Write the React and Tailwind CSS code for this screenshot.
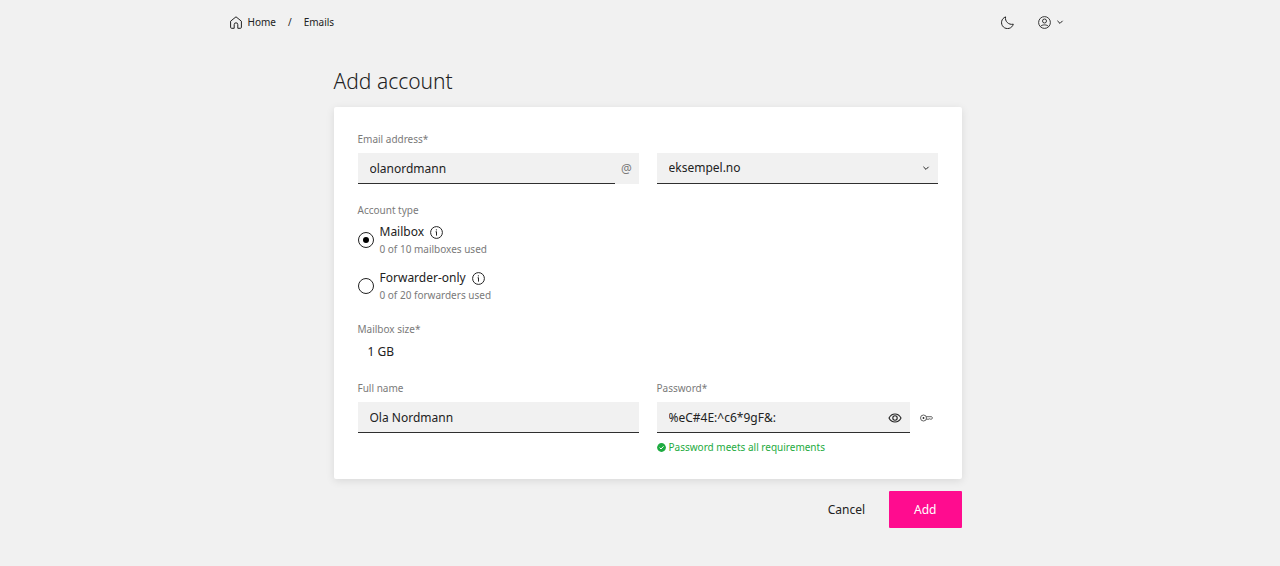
import { useState } from "react";

const label = "block text-[10px] leading-4 text-[#7a7a7a]";
const field =
  "block h-[31px] w-full min-w-0 appearance-none rounded-none border-b border-[#2f2f2f] bg-[#f1f1f1] px-3 text-xs leading-5 text-[#222] outline-none";

function Chevron({ className }) {
  return (
    <svg className={className} viewBox="0 0 8 8" fill="none" stroke="currentColor" strokeWidth="1" aria-hidden="true">
      <path d="M1.4 2.8 4 5.4 6.6 2.8" />
    </svg>
  );
}

function InfoIcon() {
  return (
    <svg className="size-[13px]" viewBox="0 0 13 13" fill="none" stroke="currentColor" aria-hidden="true">
      <circle cx="6.5" cy="6.5" r="5.9" strokeWidth="1" />
      <path d="M6.5 5.6V9.6M5.6 5.8h.9" strokeWidth="1" />
      <circle cx="6.4" cy="3.8" r=".65" fill="currentColor" stroke="none" />
    </svg>
  );
}

function AccountType({ id, title, used, checked, onSelect }) {
  return (
    <div className="flex items-center gap-[6px]">
      <input
        id={id}
        type="radio"
        name="account-type"
        checked={checked}
        onChange={onSelect}
        className="size-4 shrink-0 appearance-none rounded-full border border-[#222] bg-white bg-clip-content p-1 checked:bg-black"
      />
      <div>
        <div className="flex items-center gap-[6px] text-[#222]">
          <label htmlFor={id} className="text-xs leading-[18px]">
            {title}
          </label>
          <button type="button" aria-label={`About ${title}`}>
            <InfoIcon />
          </button>
        </div>
        <p className={label}>{used}</p>
      </div>
    </div>
  );
}

export default function App() {
  const [type, setType] = useState("mailbox");
  return (
    <div className="min-h-screen bg-[#f1f1f1] pl-[15px] font-['Noto_Sans','Open_Sans',sans-serif] text-[#222]">
      <header className="mx-auto flex h-11 max-w-[836px] items-center justify-between">
        <nav className="flex items-center text-[10px] leading-4" aria-label="Breadcrumb">
          <a href="#home" className="flex items-center gap-[6px]">
            <svg className="h-[13px] w-3" viewBox="0 0 12 13" fill="none" stroke="currentColor" strokeWidth="1" aria-hidden="true">
              <path d="M4.2 12.3H1.6Q.6 12.3.6 11.3V5.2L6 .8l5.4 4.4v6.1q0 1-1 1H7.8V8.6a1.8 1.8 0 0 0-3.6 0z" strokeLinejoin="round" />
            </svg>
            Home
          </a>
          <span className="mx-3">/</span>
          <a href="#emails">Emails</a>
        </nav>
        <div className="flex items-center gap-6 pr-[2px]">
          <button type="button" aria-label="Dark mode">
            <svg className="size-[13px]" viewBox="0 0 13 13" fill="none" stroke="currentColor" strokeWidth="1" strokeLinejoin="round" aria-hidden="true">
              <path d="M4.6.9C3.6 5.2 7.6 9.2 12.3 8.2A6 6 0 1 1 4.6.9z" />
            </svg>
          </button>
          <button type="button" aria-label="Profile" className="flex items-center gap-[5px]">
            <svg className="size-[13px]" viewBox="0 0 13 13" fill="none" stroke="currentColor" strokeWidth=".9" aria-hidden="true">
              <circle cx="6.5" cy="6.5" r="5.9" />
              <circle cx="6.5" cy="5" r="2" />
              <path d="M2.600 10.400C3.700 8.400 9.300 8.400 10.400 10.400" />
            </svg>
            <Chevron className="size-2" />
          </button>
        </div>
      </header>

      <main className="mx-auto max-w-[628px] pt-[21px] pb-8">
        <h1 className="text-[21px] leading-8 font-light">Add account</h1>

        <form onSubmit={(e) => e.preventDefault()}>
          <div className="mt-[10px] rounded-xs bg-white px-6 py-6 shadow-[0_2px_8px_rgba(0,0,0,0.1)]">
            <div className="grid grid-cols-2 items-end gap-x-[18px]">
              <div>
                <label htmlFor="email" className={label}>
                  Email address*
                </label>
                <div className="mt-[6px] flex bg-[#f1f1f1]">
                  <input id="email" defaultValue="olanordmann" className={field} />
                  <span className="flex w-6 shrink-0 items-center justify-center text-xs text-[#7a7a7a]">@</span>
                </div>
              </div>
              <div className="relative">
                <select aria-label="Domain" className={field} defaultValue="eksempel.no">
                  <option>eksempel.no</option>
                </select>
                <Chevron className="pointer-events-none absolute top-[11px] right-2 size-2" />
              </div>
            </div>

            <fieldset className="mt-[18px]">
              <legend className={label}>Account type</legend>
              <div className="mt-[5px] flex flex-col gap-3">
                <AccountType
                  id="mailbox"
                  title="Mailbox"
                  used="0 of 10 mailboxes used"
                  checked={type === "mailbox"}
                  onSelect={() => setType("mailbox")}
                />
                <AccountType
                  id="forwarder"
                  title="Forwarder-only"
                  used="0 of 20 forwarders used"
                  checked={type === "forwarder"}
                  onSelect={() => setType("forwarder")}
                />
              </div>
            </fieldset>

            <div className="mt-[18px]">
              <p className={label}>Mailbox size*</p>
              <p className="mt-[6px] px-[10px] text-xs leading-[18px]">1 GB</p>
            </div>

            <div className="mt-[19px] grid grid-cols-2 gap-x-[18px]">
              <div>
                <label htmlFor="name" className={label}>
                  Full name
                </label>
                <input id="name" defaultValue="Ola Nordmann" className={`${field} mt-[6px]`} />
              </div>
              <div>
                <label htmlFor="password" className={label}>
                  Password*
                </label>
                <div className="mt-[6px] flex items-center">
                  <div className="relative grow">
                    <input id="password" defaultValue="%eC#4E:^c6*9gF&:" className={field} />
                    <button type="button" aria-label="Hide password" className="absolute inset-y-0 right-2 flex items-center">
                      <svg className="h-3 w-[14px]" viewBox="0 0 14 12" fill="none" stroke="currentColor" strokeWidth="1.1" aria-hidden="true">
                        <path d="M1 6C3.800 .6 10.200 .6 13 6 10.200 11.400 3.800 11.400 1 6z" />
                        <circle cx="7" cy="6" r="2.200" />
                      </svg>
                    </button>
                  </div>
                  <button type="button" aria-label="Generate password" className="flex w-7 shrink-0 items-center justify-center pl-[6px]">
                    <svg className="h-2 w-[13px]" viewBox="0 0 13 8" fill="none" stroke="currentColor" strokeWidth=".7" aria-hidden="true">
                      <circle cx="3.500" cy="4" r="3" />
                      <circle cx="3.500" cy="4" r=".9" fill="currentColor" stroke="none" />
                      <path d="M6.300 2.700H11.600L12.500 3.900 11.600 5.200H10.500L9.800 4.700 9 5.200H6.300" />
                    </svg>
                  </button>
                </div>
                <p className="mt-[6px] flex items-center gap-[3px] text-[10px] leading-4 text-[#1eab41]">
                  <svg className="size-[9px]" viewBox="0 0 9 9" aria-hidden="true">
                    <circle cx="4.500" cy="4.500" r="4.400" fill="currentColor" />
                    <path d="M2.600 4.600 4 6 6.500 3.300" fill="none" stroke="#fff" strokeWidth="1" />
                  </svg>
                  Password meets all requirements
                </p>
              </div>
            </div>
          </div>

          <div className="mt-3 flex justify-end">
            <button type="button" className="h-[37px] px-6 text-xs">
              Cancel
            </button>
            <button type="submit" className="h-[37px] rounded-[1px] bg-[#ff0c8f] px-[25px] text-xs text-white">
              Add
            </button>
          </div>
        </form>
      </main>
    </div>
  );
}
